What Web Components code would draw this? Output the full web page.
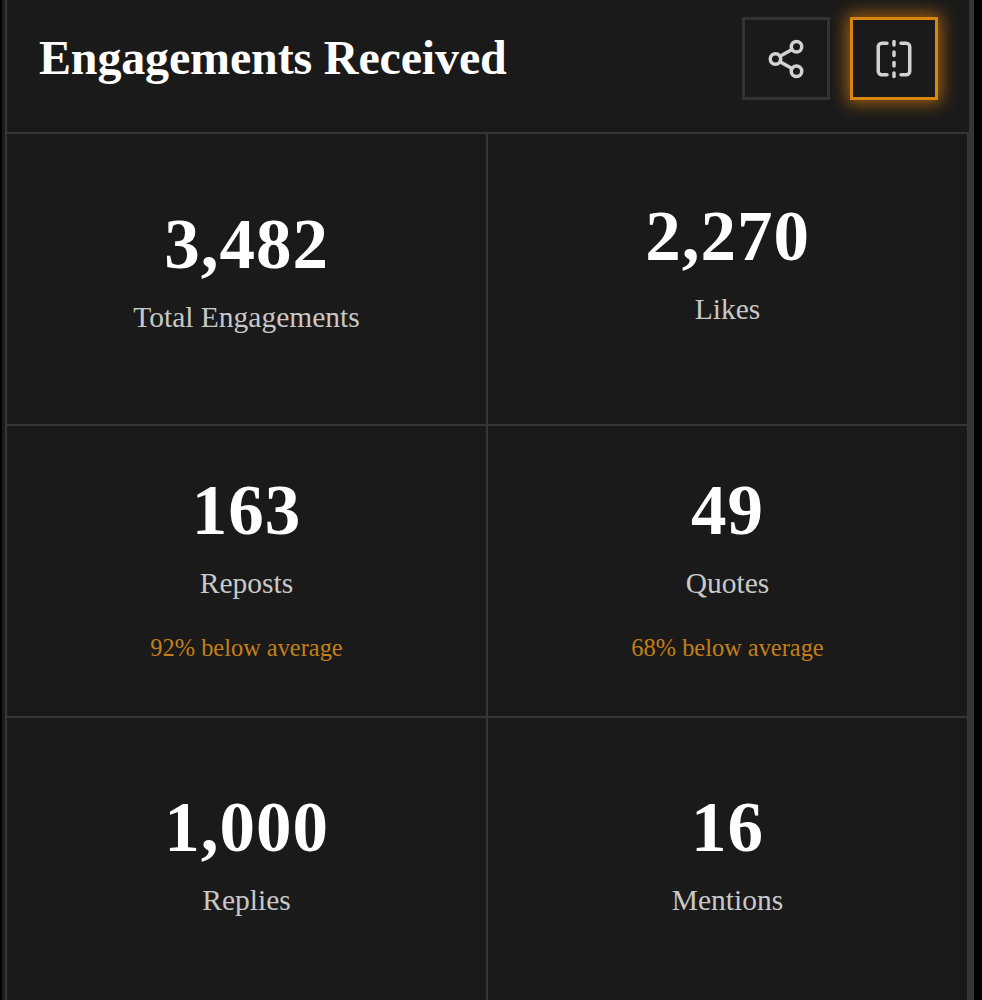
<!DOCTYPE html>
<html>
<head>
<meta charset="utf-8">
<style>
    html, body { margin: 0; height: 1000px; overflow: hidden; background: #000; }
    body { font-family: "Liberation Serif", serif; }
</style>
</head>
<body>
<engagement-card>
    <card-header title="Engagements Received">
        <icon-button icon="share"></icon-button>
        <icon-button icon="flip" active></icon-button>
    </card-header>
    <stat-cell value="3,482" label="Total Engagements" style="--top: 75px"></stat-cell>
    <stat-cell value="2,270" label="Likes" style="--top: 67px"></stat-cell>
    <stat-cell value="163" label="Reposts" note="92% below average"></stat-cell>
    <stat-cell value="49" label="Quotes" note="68% below average"></stat-cell>
    <stat-cell value="1,000" label="Replies" style="--top: 74px"></stat-cell>
    <stat-cell value="16" label="Mentions" style="--top: 74px"></stat-cell>
</engagement-card>

<script>
const ICONS = {
    share: `<circle cx="18" cy="5" r="3"/><circle cx="6" cy="12" r="3"/><circle cx="18" cy="19" r="3"/>
            <path d="M8.59 13.51l6.83 3.98"/><path d="M15.41 6.51l-6.82 3.98"/>`,
    flip: `<path d="M8 3H5a2 2 0 0 0-2 2v14c0 1.1.9 2 2 2h3"/><path d="M16 3h3a2 2 0 0 1 2 2v14a2 2 0 0 1-2 2h-3"/>
           <path d="M12 20v2"/><path d="M12 14v2"/><path d="M12 8v2"/><path d="M12 2v2"/>`
};

class EngagementCard extends HTMLElement {
    constructor() {
        super();
        this.attachShadow({ mode: 'open' });
        this.shadowRoot.innerHTML = `
            <style>
                :host {
                    display: block;
                    box-sizing: border-box;
                    width: 969px;
                    height: 1000px;
                    margin-left: 5px;
                    background: #1a1a1a;
                    border-left: 2px solid #363636;
                    border-right: 5px solid #363636;
                    box-shadow: -3px 0 0 #1c1c1c;
                    overflow: hidden;
                }
                .grid {
                    display: grid;
                    grid-template-columns: 481px 481px;
                    grid-auto-rows: 292px;
                }
            </style>
            <slot name="header"></slot>
            <div class="grid"><slot></slot></div>
        `;
    }
}

class CardHeader extends HTMLElement {
    constructor() {
        super();
        this.attachShadow({ mode: 'open' });
        this.slot = 'header';
        this.shadowRoot.innerHTML = `
            <style>
                :host {
                    display: flex;
                    box-sizing: border-box;
                    height: 134px;
                    align-items: flex-start;
                    justify-content: space-between;
                    padding: 17px 31px 0 32px;
                    border-bottom: 2px solid #363636;
                }
                h1 {
                    margin: 0;
                    padding-top: 13px;
                    font: bold 48px/56px "Liberation Serif", serif;
                    letter-spacing: -0.15px;
                    color: #fff;
                }
                .actions { display: flex; gap: 20px; }
            </style>
            <h1>${this.getAttribute('title')}</h1>
            <div class="actions"><slot></slot></div>
        `;
        this.removeAttribute('title');
    }
}

class IconButton extends HTMLElement {
    constructor() {
        super();
        this.attachShadow({ mode: 'open' });
        this.shadowRoot.innerHTML = `
            <style>
                :host {
                    display: flex;
                    box-sizing: border-box;
                    width: 88px;
                    height: 83px;
                    align-items: center;
                    justify-content: center;
                    background: #1a1a1a;
                    border: 3px solid #333;
                }
                :host([active]) {
                    border-color: #d98610;
                    box-shadow: 0 0 16px 3px rgba(235, 135, 10, 0.65);
                }
                svg {
                    width: 42px;
                    height: 42px;
                    fill: none;
                    stroke: #d2d2d2;
                    stroke-width: 2;
                    stroke-linecap: round;
                    stroke-linejoin: round;
                }
            </style>
            <svg viewBox="0 0 24 24">${ICONS[this.getAttribute('icon')]}</svg>
        `;
    }
}

class StatCell extends HTMLElement {
    constructor() {
        super();
        this.attachShadow({ mode: 'open' });
        const note = this.getAttribute('note');
        this.shadowRoot.innerHTML = `
            <style>
                :host {
                    display: flex;
                    flex-direction: column;
                    box-sizing: border-box;
                    align-items: center;
                    padding-top: var(--top, 49px);
                    border-right: 2px solid #363636;
                    border-bottom: 2px solid #363636;
                    text-align: center;
                }
                .value {
                    font: bold 71px/70px "Liberation Serif", serif;
                    letter-spacing: 1px;
                    color: #fff;
                }
                .label {
                    margin-top: 20px;
                    font: 29.5px/36px "Liberation Serif", serif;
                    color: #c8c8c8;
                }
                .note {
                    margin-top: 32px;
                    font: 24.4px/30px "Liberation Serif", serif;
                    color: #c47f17;
                }
            </style>
            <div class="value">${this.getAttribute('value')}</div>
            <div class="label">${this.getAttribute('label')}</div>
            ${note ? `<div class="note">${note}</div>` : ''}
        `;
    }
}

customElements.define('engagement-card', EngagementCard);
customElements.define('card-header', CardHeader);
customElements.define('icon-button', IconButton);
customElements.define('stat-cell', StatCell);
</script>
</body>
</html>
